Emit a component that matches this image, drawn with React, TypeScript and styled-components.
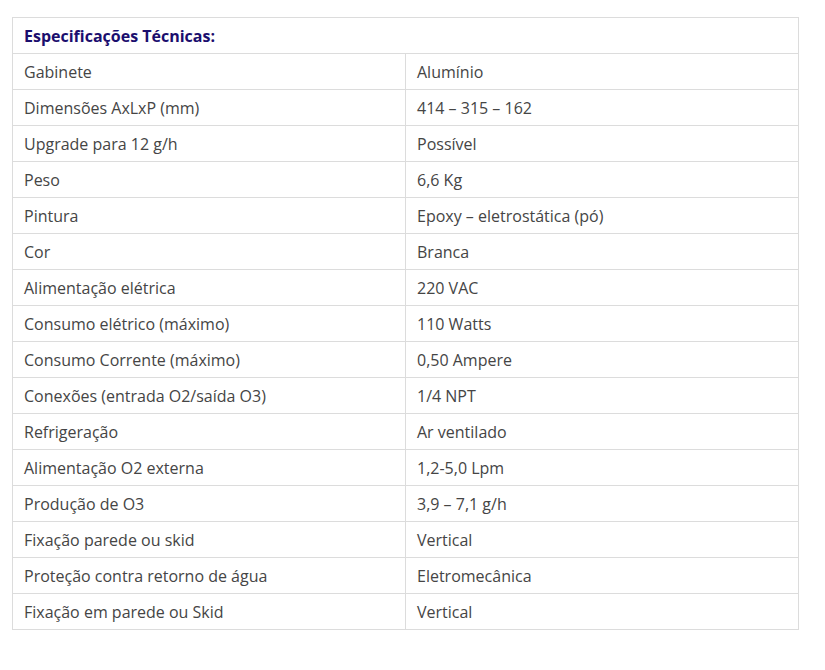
import React from "react";
import styled, { createGlobalStyle } from "styled-components";

const GlobalStyle = createGlobalStyle`
  html, body {
    margin: 0;
    padding: 0;
    background: #ffffff;
  }
`;

const Wrapper = styled.div`
  padding: 17px 26px 0 12px;
  font-family: "Open Sans", "Noto Sans", sans-serif;
`;

const Table = styled.table`
  width: 787px;
  border-collapse: collapse;
  table-layout: fixed;
  border: 1px solid #dcdcdc;
`;

const HeaderCell = styled.th`
  height: 35px;
  padding: 0 11px;
  text-align: left;
  font-size: 16px;
  font-weight: 700;
  color: #1b0e6e;
  border: 1px solid #dcdcdc;
`;

const Cell = styled.td`
  height: 35px;
  padding: 0 11px;
  font-size: 16px;
  color: #454545;
  border: 1px solid #dcdcdc;
`;

const specs: [string, string][] = [
  ["Gabinete", "Alumínio"],
  ["Dimensões AxLxP (mm)", "414 – 315 – 162"],
  ["Upgrade para 12 g/h", "Possível"],
  ["Peso", "6,6 Kg"],
  ["Pintura", "Epoxy – eletrostática (pó)"],
  ["Cor", "Branca"],
  ["Alimentação elétrica", "220 VAC"],
  ["Consumo elétrico (máximo)", "110 Watts"],
  ["Consumo Corrente (máximo)", "0,50 Ampere"],
  ["Conexões (entrada O2/saída O3)", "1/4 NPT"],
  ["Refrigeração", "Ar ventilado"],
  ["Alimentação O2 externa", "1,2-5,0 Lpm"],
  ["Produção de O3", "3,9 – 7,1 g/h"],
  ["Fixação parede ou skid", "Vertical"],
  ["Proteção contra retorno de água", "Eletromecânica"],
  ["Fixação em parede ou Skid", "Vertical"],
];

const App: React.FC = () => {
  return (
    <Wrapper>
      <GlobalStyle />
      <Table>
        <thead>
          <tr>
            <HeaderCell colSpan={2}>Especificações Técnicas:</HeaderCell>
          </tr>
        </thead>
        <tbody>
          {specs.map(([label, value]) => (
            <tr key={label}>
              <Cell>{label}</Cell>
              <Cell>{value}</Cell>
            </tr>
          ))}
        </tbody>
      </Table>
    </Wrapper>
  );
};

export default App;
